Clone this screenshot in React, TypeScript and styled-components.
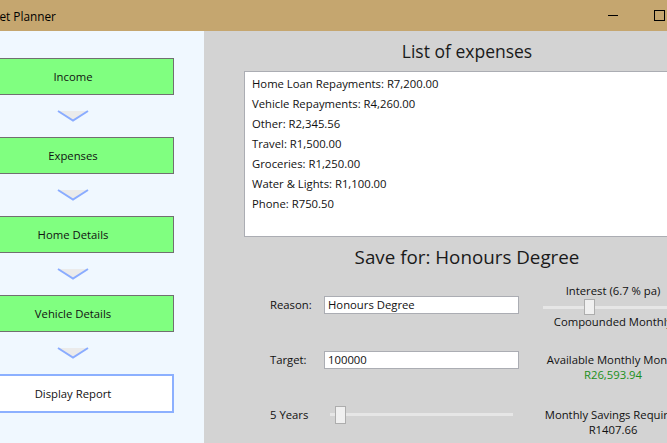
import React from "react";
import styled, { createGlobalStyle } from "styled-components";

const GlobalStyle = createGlobalStyle`
  html, body { margin: 0; padding: 0; overflow: hidden; }
  body { font-family: "Open Sans", "Noto Sans", sans-serif; color: #111; }
`;

const TAN = "#c5a66f";
const FS = 11.3;

const Viewport = styled.div`
  width: 667px;
  height: 443px;
  overflow: hidden;
`;

const Window = styled.div`
  width: 760px;
  height: 443px;
  margin-left: -30px;
  display: flex;
  flex-direction: column;
  background: ${TAN};
`;

const TitleBar = styled.div`
  height: 31px;
  flex: none;
  display: flex;
  align-items: center;
  background: ${TAN};
`;

const Title = styled.div`
  font-size: ${FS + 0.5}px;
  color: #000;
  margin-left: 1px;
  flex: 1;
`;

const CaptionButton = styled.div<{ $w?: number }>`
  width: ${(p) => p.$w ?? 46}px;
  height: 31px;
  display: flex;
  align-items: center;
  justify-content: center;
`;

const MinIcon = styled.div`
  width: 10px;
  height: 1px;
  background: #000;
`;

const MaxIcon = styled.div`
  width: 9px;
  height: 9px;
  border: 1px solid #000;
`;

const CloseIcon = styled.span`
  font-size: 14px;
  color: #000;
`;

const Body = styled.div`
  flex: 1;
  display: flex;
  min-height: 0;
`;

const Sidebar = styled.div`
  width: 234px;
  flex: none;
  background: #f0f8ff;
  padding: 27px 0 0 2px;
  box-sizing: border-box;
  display: flex;
  flex-direction: column;
`;

const StepButton = styled.div<{ $active?: boolean }>`
  width: 202px;
  height: ${(p) => (p.$active ? 39 : 37)}px;
  box-sizing: border-box;
  background: ${(p) => (p.$active ? "#ffffff" : "#80ff80")};
  border: ${(p) => (p.$active ? "2px solid #8cb0ff" : "1px solid #707070")};
  display: flex;
  align-items: center;
  justify-content: center;
  font-size: ${FS}px;
  color: #111;
`;

const ChevronSlot = styled.div`
  width: 202px;
  height: 42px;
  display: flex;
  align-items: center;
  justify-content: center;
`;

const MainPanel = styled.div`
  flex: 1;
  background: #d3d3d3;
  display: flex;
  flex-direction: column;
  align-items: center;
  padding-top: 6px;
`;

const Heading = styled.div<{ $size: number }>`
  font-size: ${(p) => p.$size}px;
  line-height: 28px;
  color: #1a1a1a;
`;

const ListBox = styled.div`
  width: 446px;
  height: 166px;
  box-sizing: border-box;
  margin: 6px 0 6px;
  background: #fff;
  border: 1px solid #abadb3;
  padding: 2px 7px;
`;

const ListItem = styled.div`
  height: 20px;
  line-height: 20px;
  font-size: ${FS}px;
  color: #111;
`;

const FormGrid = styled.div`
  align-self: flex-start;
  margin: 6px 0 0 66px;
  display: grid;
  grid-template-columns: 54px 195px 24px 140px;
  grid-auto-rows: 55px;
  align-items: center;
`;

const Label = styled.div`
  font-size: ${FS}px;
  color: #111;
`;

const TextBox = styled.div`
  height: 18px;
  box-sizing: border-box;
  background: #fff;
  border: 1px solid #abadb3;
  padding-left: 3px;
  font-size: ${FS}px;
  line-height: 16px;
  color: #111;
`;

const InfoCell = styled.div<{ $start?: boolean }>`
  align-self: ${(p) => (p.$start ? "start" : "center")};
  padding-top: ${(p) => (p.$start ? 20 : 0)}px;
  display: flex;
  flex-direction: column;
  align-items: stretch;
  text-align: center;
  font-size: ${FS}px;
  line-height: 15px;
  white-space: nowrap;
  color: #111;
`;

const InfoLine = styled.div<{ $gap?: number }>`
  margin-top: ${(p) => p.$gap ?? 0}px;
`;

const Money = styled.div<{ $green?: boolean }>`
  color: ${(p) => (p.$green ? "#1a8f1a" : "#111")};
`;

const SliderWrap = styled.div<{ $inset?: number }>`
  position: relative;
  height: 18px;
  margin: 0 ${(p) => p.$inset ?? 0}px;
  display: flex;
  align-items: center;
`;

const Track = styled.div`
  height: 3px;
  flex: 1;
  background: #e6e6e6;
`;

const Thumb = styled.div<{ $h: number }>`
  position: absolute;
  top: 50%;
  width: 11px;
  height: ${(p) => p.$h}px;
  transform: translateY(-50%);
  box-sizing: border-box;
  background: #f0f0f0;
  border: 1px solid #adadad;
`;

function Slider({ frac, inset, thumbH }: { frac: number; inset?: number; thumbH: number }) {
  return (
    <SliderWrap $inset={inset}>
      <Track />
      <Thumb $h={thumbH} style={{ left: `calc((100% - 11px) * ${frac})` }} />
    </SliderWrap>
  );
}

function Chevron() {
  return (
    <svg width="32" height="12" viewBox="0 0 32 12">
      <polygon points="1,1 31,1 16,10.5" fill="#ebebeb" />
      <polyline points="1,1 16,10.5 31,1" fill="none" stroke="#8aacff" strokeWidth="2" />
    </svg>
  );
}

const steps = ["Income", "Expenses", "Home Details", "Vehicle Details"];

const expenses = [
  "Home Loan Repayments: R7,200.00",
  "Vehicle Repayments: R4,260.00",
  "Other: R2,345.56",
  "Travel: R1,500.00",
  "Groceries: R1,250.00",
  "Water & Lights: R1,100.00",
  "Phone: R750.50",
];

export default function App() {
  return (
    <Viewport>
      <GlobalStyle />
      <Window>
        <TitleBar>
          <Title>Budget Planner</Title>
          <CaptionButton>
            <MinIcon />
          </CaptionButton>
          <CaptionButton>
            <MaxIcon />
          </CaptionButton>
          <CaptionButton $w={48}>
            <CloseIcon>✕</CloseIcon>
          </CaptionButton>
        </TitleBar>
        <Body>
          <Sidebar>
            {steps.map((s) => (
              <React.Fragment key={s}>
                <StepButton>{s}</StepButton>
                <ChevronSlot>
                  <Chevron />
                </ChevronSlot>
              </React.Fragment>
            ))}
            <StepButton $active>Display Report</StepButton>
          </Sidebar>
          <MainPanel>
            <Heading $size={17.5}>List of expenses</Heading>
            <ListBox>
              {expenses.map((e) => (
                <ListItem key={e}>{e}</ListItem>
              ))}
            </ListBox>
            <Heading $size={18.8}>Save for: Honours Degree</Heading>
            <FormGrid>
              <Label>Reason:</Label>
              <TextBox>Honours Degree</TextBox>
              <span />
              <InfoCell>
                <InfoLine $gap={3}>Interest (6.7 % pa)</InfoLine>
                <Slider frac={0.32} thumbH={16} />
                <InfoLine $gap={-2}>Compounded Monthly</InfoLine>
              </InfoCell>

              <Label>Target:</Label>
              <TextBox>100000</TextBox>
              <span />
              <InfoCell $start>
                <InfoLine>Available Monthly Money</InfoLine>
                <Money $green>R26,593.94</Money>
              </InfoCell>

              <Label>5 Years</Label>
              <Slider frac={0.03} inset={6} thumbH={18} />
              <span />
              <InfoCell $start>
                <InfoLine>Monthly Savings Required</InfoLine>
                <Money>R1407.66</Money>
              </InfoCell>
            </FormGrid>
          </MainPanel>
        </Body>
      </Window>
    </Viewport>
  );
}
